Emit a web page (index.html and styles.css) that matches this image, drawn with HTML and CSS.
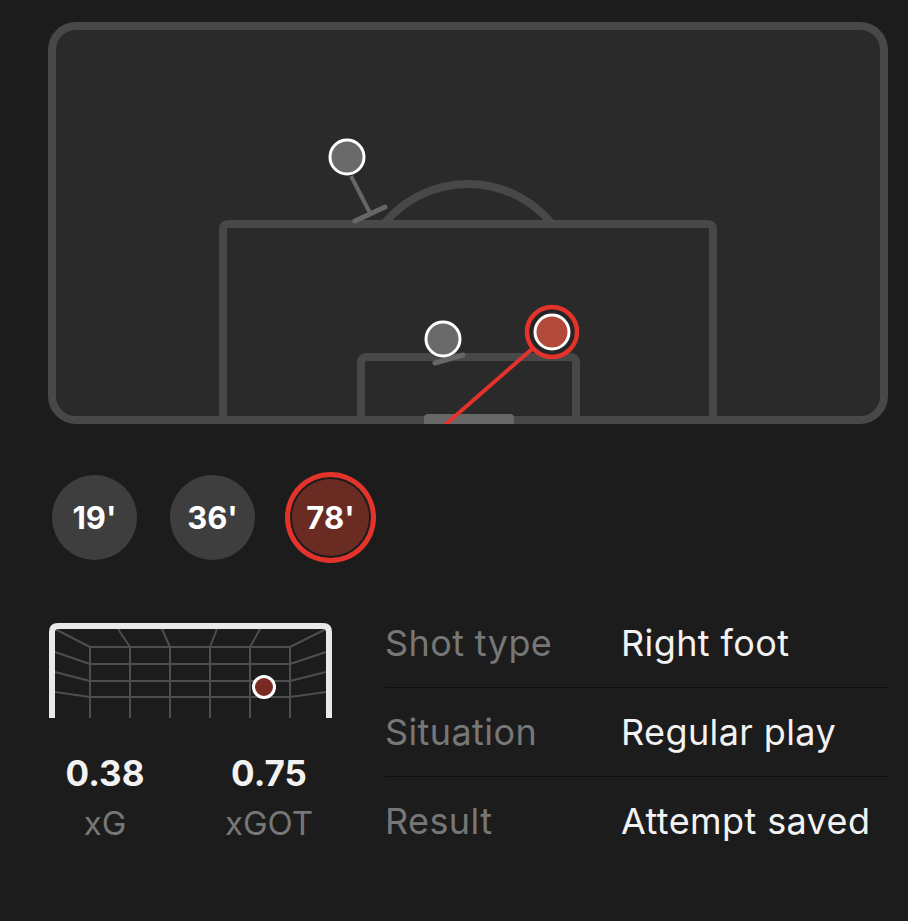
FILE: index.html
```html
<!DOCTYPE html>
<html>
<head>
    <meta charset="UTF-8">
    <meta name="viewport" content="width=device-width, initial-scale=1.0">
    <title>Shot map</title>
    <link rel="stylesheet" href="styles.css">
</head>
<body>
    <div class="match">
        <svg class="pitch" width="840" height="402" viewBox="0 0 840 402">
            <rect class="turf" x="4" y="4" width="832" height="394" rx="24"/>
            <path class="line" d="M175,398 V208 Q175,202 181,202 H659 Q665,202 665,208 V398"/>
            <path class="line" d="M313,398 V341 Q313,335 319,335 H522 Q528,335 528,341 V398"/>
            <path class="line" d="M336,202 A108,108 0 0 1 504,202"/>
            <path class="mouth" d="M376,402 V396 Q376,392 380,392 H462 Q466,392 466,396 V402 Z"/>

            <line class="trail" x1="303" y1="154" x2="322" y2="191"/>
            <line class="block" x1="307" y1="199" x2="337" y2="185"/>
            <circle class="shot" cx="299" cy="135" r="17"/>

            <line class="block" x1="387" y1="341" x2="415" y2="333"/>
            <circle class="shot" cx="395" cy="317" r="17"/>

            <line class="trail active" x1="484" y1="327" x2="397" y2="403"/>
            <circle class="halo" cx="504" cy="310" r="25"/>
            <circle class="shot active" cx="504" cy="310" r="17"/>
        </svg>

        <div class="shots">
            <div class="chip">19'</div>
            <div class="chip">36'</div>
            <div class="chip selected">78'</div>
        </div>

        <div class="detail">
            <div class="xg">
                <svg class="goal" width="284" height="96" viewBox="0 0 284 96">
                    <g class="net">
                        <path d="M42,25 V96 M82,25 V96 M122,25 V96 M162,25 V96 M202,25 V96 M242,25 V96"/>
                        <path d="M42,25 H242 M42,42 H242 M42,59 H242 M42,75 H242"/>
                        <path d="M7,7 L42,25 M70,7 L82,25 M114,7 L122,25 M169,7 L162,25 M212,7 L202,25 M278,7 L242,25"/>
                        <path d="M7,30 L42,42 M7,50 L42,59 M7,70 L42,75"/>
                        <path d="M278,30 L242,42 M278,50 L242,59 M278,70 L242,75"/>
                    </g>
                    <path class="frame" d="M4,96 V10 Q4,4 10,4 H275 Q281,4 281,10 V96"/>
                    <circle class="ball" cx="216" cy="65" r="10.5"/>
                </svg>
                <div class="stats">
                    <div class="stat">
                        <div class="value">0.38</div>
                        <div class="label">xG</div>
                    </div>
                    <div class="stat">
                        <div class="value">0.75</div>
                        <div class="label">xGOT</div>
                    </div>
                </div>
            </div>

            <div class="facts">
                <div class="row"><span class="key">Shot type</span><span class="val">Right foot</span></div>
                <div class="row"><span class="key">Situation</span><span class="val">Regular play</span></div>
                <div class="row"><span class="key">Result</span><span class="val">Attempt saved</span></div>
            </div>
        </div>
    </div>
</body>
</html>
```

FILE: styles.css
```css
body {
    margin: 0;
    background-color: #1c1c1c;
    font-family: Inter, "Noto Sans", sans-serif;
    color: #f2f2f2;
}
.match {
    width: 840px;
    padding: 22px 20px 0 48px;
}
.pitch {
    display: block;
}
.turf {
    fill: #2a2a2a;
    stroke: #484848;
    stroke-width: 8;
}
.line {
    fill: none;
    stroke: #484848;
    stroke-width: 8;
}
.mouth {
    fill: #676767;
}
.trail {
    stroke: #666;
    stroke-width: 4;
}
.trail.active {
    stroke: #e3332a;
}
.block {
    stroke: #666;
    stroke-width: 5;
    stroke-linecap: round;
}
.shot {
    fill: #6a6a6a;
    stroke: #fff;
    stroke-width: 3;
}
.shot.active {
    fill: #b24a3a;
}
.halo {
    fill: #262626;
    stroke: #e3332a;
    stroke-width: 4.5;
}
.shots {
    display: flex;
    gap: 33px;
    margin: 51px 0 0 4px;
}
.chip {
    width: 85px;
    height: 85px;
    box-sizing: border-box;
    border-radius: 50%;
    background: #3e3e3e;
    display: flex;
    align-items: center;
    justify-content: center;
    font-size: 31px;
    font-weight: 700;
    color: #fff;
}
.chip.selected {
    background: #6a2b23;
    border: 2px solid #e3332a;
    box-shadow: 0 0 0 3px #e3332a, inset 0 0 0 2px #1c1c1c;
}
.detail {
    display: flex;
    margin-top: 39px;
}
.xg {
    width: 284px;
}
.goal {
    display: block;
    margin-top: 23px;
}
.net {
    fill: none;
    stroke: #4e4e4e;
    stroke-width: 2;
}
.frame {
    fill: none;
    stroke: #e9e9e9;
    stroke-width: 6;
}
.ball {
    fill: #7a2a22;
    stroke: #fff;
    stroke-width: 3;
}
.stats {
    display: grid;
    grid-template-columns: 114px 114px;
    gap: 50px;
    margin-top: 35px;
    text-align: center;
}
.value {
    font-size: 35px;
    font-weight: 700;
    line-height: 40px;
}
.label {
    margin-top: 10px;
    font-size: 33px;
    line-height: 40px;
    color: #777;
}
.facts {
    margin-left: 53px;
    width: 503px;
}
.row {
    display: grid;
    grid-template-columns: 236px 1fr;
    align-items: center;
    height: 88px;
    border-bottom: 1px solid #0e0e0e;
    font-size: 36px;
    letter-spacing: 0.4px;
}
.row:last-child {
    border-bottom: none;
}
.key {
    color: #777;
}
.val {
    color: #f2f2f2;
}
```
